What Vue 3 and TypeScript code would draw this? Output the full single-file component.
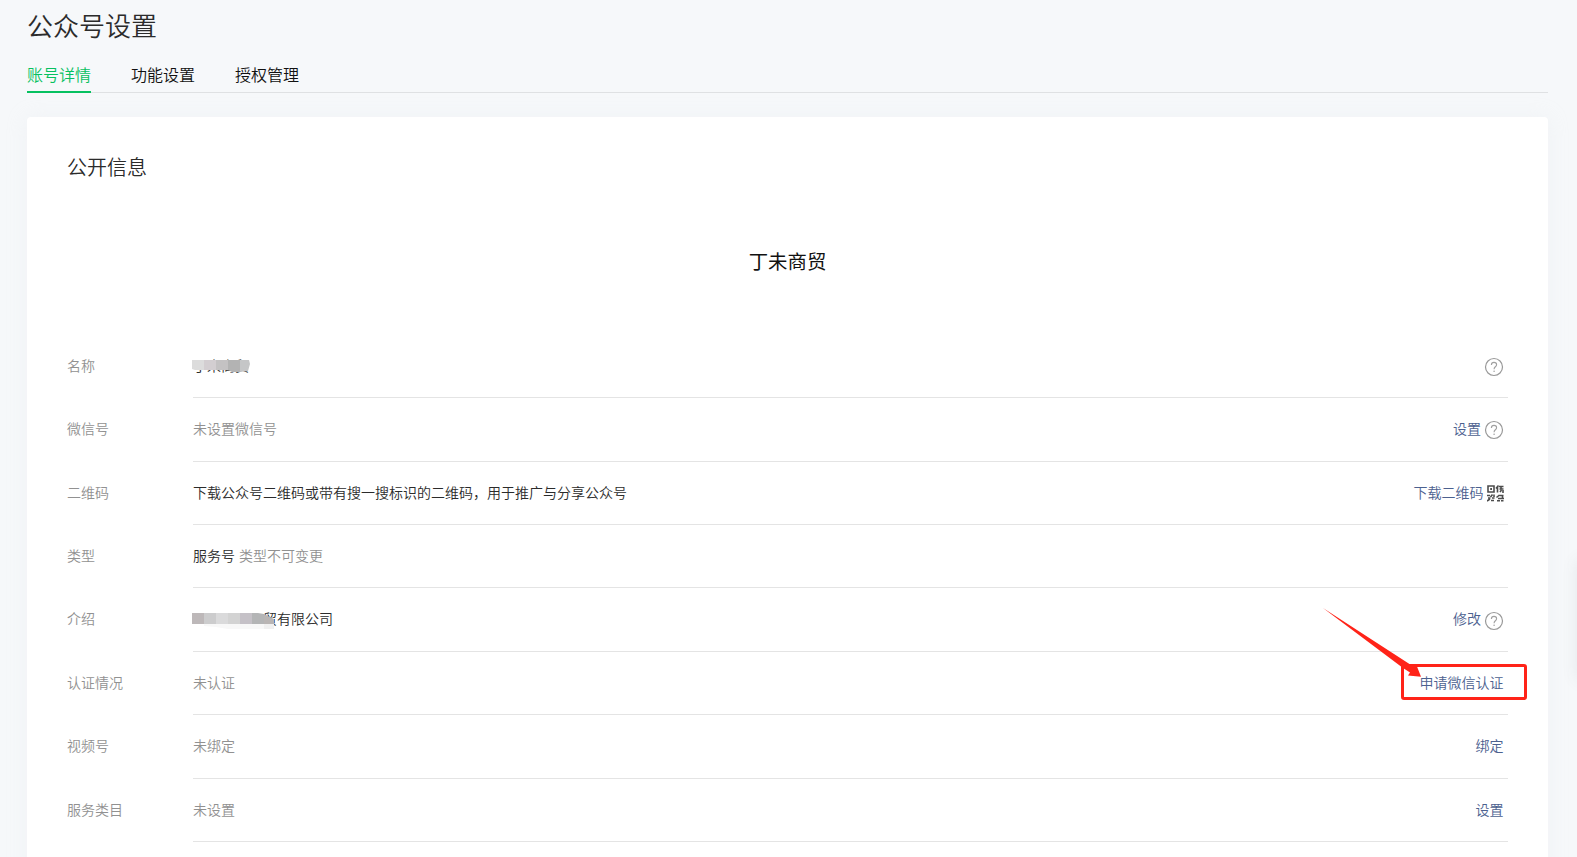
<script setup lang="ts">
interface Row {
  label: string
  value?: string
  muted?: string
  action?: string
  icon?: 'help' | 'qr'
  mask?: 'name' | 'intro'
  highlight?: boolean
}

const tabs: string[] = ['账号详情', '功能设置', '授权管理']

const rows: Row[] = [
  { label: '名称', value: '丁未商贸', mask: 'name', icon: 'help' },
  { label: '微信号', muted: '未设置微信号', action: '设置', icon: 'help' },
  { label: '二维码', value: '下载公众号二维码或带有搜一搜标识的二维码，用于推广与分享公众号', action: '下载二维码', icon: 'qr' },
  { label: '类型', value: '服务号', muted: '类型不可变更' },
  { label: '介绍', value: '贸有限公司', mask: 'intro', action: '修改', icon: 'help' },
  { label: '认证情况', muted: '未认证', action: '申请微信认证', highlight: true },
  { label: '视频号', muted: '未绑定', action: '绑定' },
  { label: '服务类目', muted: '未设置', action: '设置' },
]
</script>

<template>
  <div class="page">
    <h1 class="title">公众号设置</h1>
    <nav class="tabs">
      <a v-for="(tab, i) in tabs" :key="tab" class="tab" :class="{ active: i === 0 }">{{ tab }}</a>
    </nav>
    <main class="card">
      <h2 class="section">公开信息</h2>
      <div class="brand">丁未商贸</div>
      <div class="list">
        <div v-for="row in rows" :key="row.label" class="row">
          <div class="label">{{ row.label }}</div>
          <div class="body">
            <div class="value" :class="row.mask && 'value-' + row.mask">
              <span v-if="row.value">{{ row.value }}</span>
              <span v-if="row.muted" class="muted">{{ row.muted }}</span>
              <svg v-if="row.mask === 'name'" class="mask" width="60" height="20" viewBox="0 0 60 20">
                <path d="M0 4h12v10H3l-3-1z" fill="#dcdcdc" />
                <path d="M12 4h12v10H12z" fill="#d3ced1" />
                <path d="M24 4h12v10H24z" fill="#c4c2c3" />
                <path d="M36 4h12v12h-8l-4-2z" fill="#b3b3b3" />
                <path d="M48 4h9l1 4-2 7-8 1z" fill="#c5c6c7" />
              </svg>
              <svg v-if="row.mask === 'intro'" class="mask" width="84" height="20" viewBox="0 -1 84 20">
                <path d="M12 14h60v5H36l-12-2-12-1z" fill="#f8f8f8" />
                <path d="M72 13h10v6H72z" fill="#f0f0f0" />
                <path d="M0 3h12v11H0z" fill="#bdb8b9" />
                <path d="M12 3h12v11H12z" fill="#cccccd" />
                <path d="M24 3h12v11H24z" fill="#dadadb" />
                <path d="M36 3h12v11H36z" fill="#d3d3d3" />
                <path d="M48 3h12v11H48z" fill="#c5c1c7" />
                <path d="M60 3h6l6 1v10H60z" fill="#b4b5b6" />
                <path d="M72 4l4 2 6 3v5H72z" fill="#b9b5b4" />
              </svg>
            </div>
            <div class="actions">
              <a v-if="row.action" class="link">{{ row.action }}</a>
              <svg v-if="row.icon === 'help'" class="help" width="20" height="20" viewBox="0 0 20 20" fill="none">
                <circle cx="10" cy="10" r="8.5" stroke="#999" stroke-width="1.2" />
                <path d="M7.4 8.1C7.4 6.4 8.4 5.4 10 5.4c1.5 0 2.6.9 2.6 2.3 0 2-2.5 2.1-2.5 4.2v.4" stroke="#a0a0a0" stroke-width="1.1" />
                <circle cx="10.1" cy="14.2" r=".8" fill="#a0a0a0" />
              </svg>
              <svg v-if="row.icon === 'qr'" class="qr" width="17" height="17" viewBox="0 0 17 17" fill="none" stroke="#4c4c4c" stroke-width="1.6">
                <path d="M1 1h6v6H1z" />
                <path d="M3.2 4h1.8" stroke-width="2" />
                <path d="M9 3.5l2.5-3M10.5 2v5.5M12 1.5h4.5M12.5 4h4M14 1v3M13 7l1.5-2M16 5v3" />
                <path d="M0 10.5h3M3.5 12l2-2.5M1 13h2.5M7 9.5v2.5M0 16l3-2M4 15.5h3M5 13h2.5" />
                <path d="M9.5 12.5l3-2.5M12.5 10.5h4M10 15.8h3M11 13.5h6M15.5 11v2.5M14 15.8h2.5" />
              </svg>
            </div>
            <div v-if="row.highlight" class="callout">
              <svg class="arrow" width="100" height="72" viewBox="0 0 100 72">
                <path d="M0 0L88 57 94 58.5 98 68.7 85 67.5 87 64.5 80 60z" fill="#ff2318" />
              </svg>
            </div>
          </div>
        </div>
      </div>
    </main>
    <div class="float-shadow"></div>
  </div>
</template>

<style>
body {
  margin: 0;
  overflow: hidden;
}
</style>

<style scoped>
.page {
  position: relative;
  box-sizing: border-box;
  height: 857px;
  padding: 7px 29px 0 27px;
  overflow: hidden;
  background: #f6f8fa;
  color: #2b2b2b;
  font-family: "Liberation Sans", "Noto Sans CJK SC", sans-serif;
  font-size: 14px;
  font-weight: 350;
}
.title {
  margin: 0;
  height: 40px;
  line-height: 40px;
  font-size: 26px;
  font-weight: 350;
}
.tabs {
  display: flex;
  gap: 40px;
  height: 45px;
  border-bottom: 1px solid #dfe1e3;
}
.tab {
  box-sizing: border-box;
  height: 46px;
  padding-top: 17px;
  line-height: 24px;
  font-size: 16px;
  color: #111;
}
.tab.active {
  color: #07c160;
  border-bottom: 2px solid #07c160;
}
.card {
  height: 760px;
  margin-top: 24px;
  padding: 0 40px;
  background: #fff;
  border-radius: 4px 4px 0 0;
  box-shadow: 0 1px 20px rgba(228, 232, 235, 0.25);
}
.section {
  margin: 0;
  padding-top: 36px;
  line-height: 30px;
  font-size: 20px;
  font-weight: 350;
}
.brand {
  margin-top: 63px;
  line-height: 32px;
  text-align: center;
  font-size: 19.4px;
  font-weight: 400;
  color: #111;
}
.list {
  margin-top: 56.8px;
}
.row {
  display: flex;
  height: 63.4px;
}
.label {
  width: 126px;
  line-height: 62px;
  color: #919191;
}
.body {
  position: relative;
  display: flex;
  flex: 1;
  justify-content: space-between;
  box-sizing: border-box;
  padding-right: 4px;
  border-bottom: 1px solid #e4e4e4;
  line-height: 62px;
}
.value {
  position: relative;
  display: flex;
  gap: 4px;
}
.value-intro {
  padding-left: 70px;
}
.mask {
  position: absolute;
  left: -1px;
  top: 21px;
}
.muted {
  color: #919191;
}
.actions {
  display: flex;
  align-items: flex-start;
  gap: 3px;
}
.link {
  color: #4c618f;
}
.link:last-child {
  margin-right: 0.5px;
}
.help {
  margin-top: 22.2px;
}
.qr {
  margin: 23.5px 0.5px 0 0;
}
.callout {
  position: absolute;
  right: -19px;
  top: 12px;
  box-sizing: border-box;
  width: 126px;
  height: 36px;
  border: 3px solid #ff2318;
  border-radius: 3px;
}
.arrow {
  position: absolute;
  left: -81px;
  top: -59px;
}
.float-shadow {
  position: absolute;
  right: -20px;
  top: 560px;
  width: 20px;
  height: 120px;
  box-shadow: 0 0 16px rgba(80, 90, 100, 0.1);
}
</style>
